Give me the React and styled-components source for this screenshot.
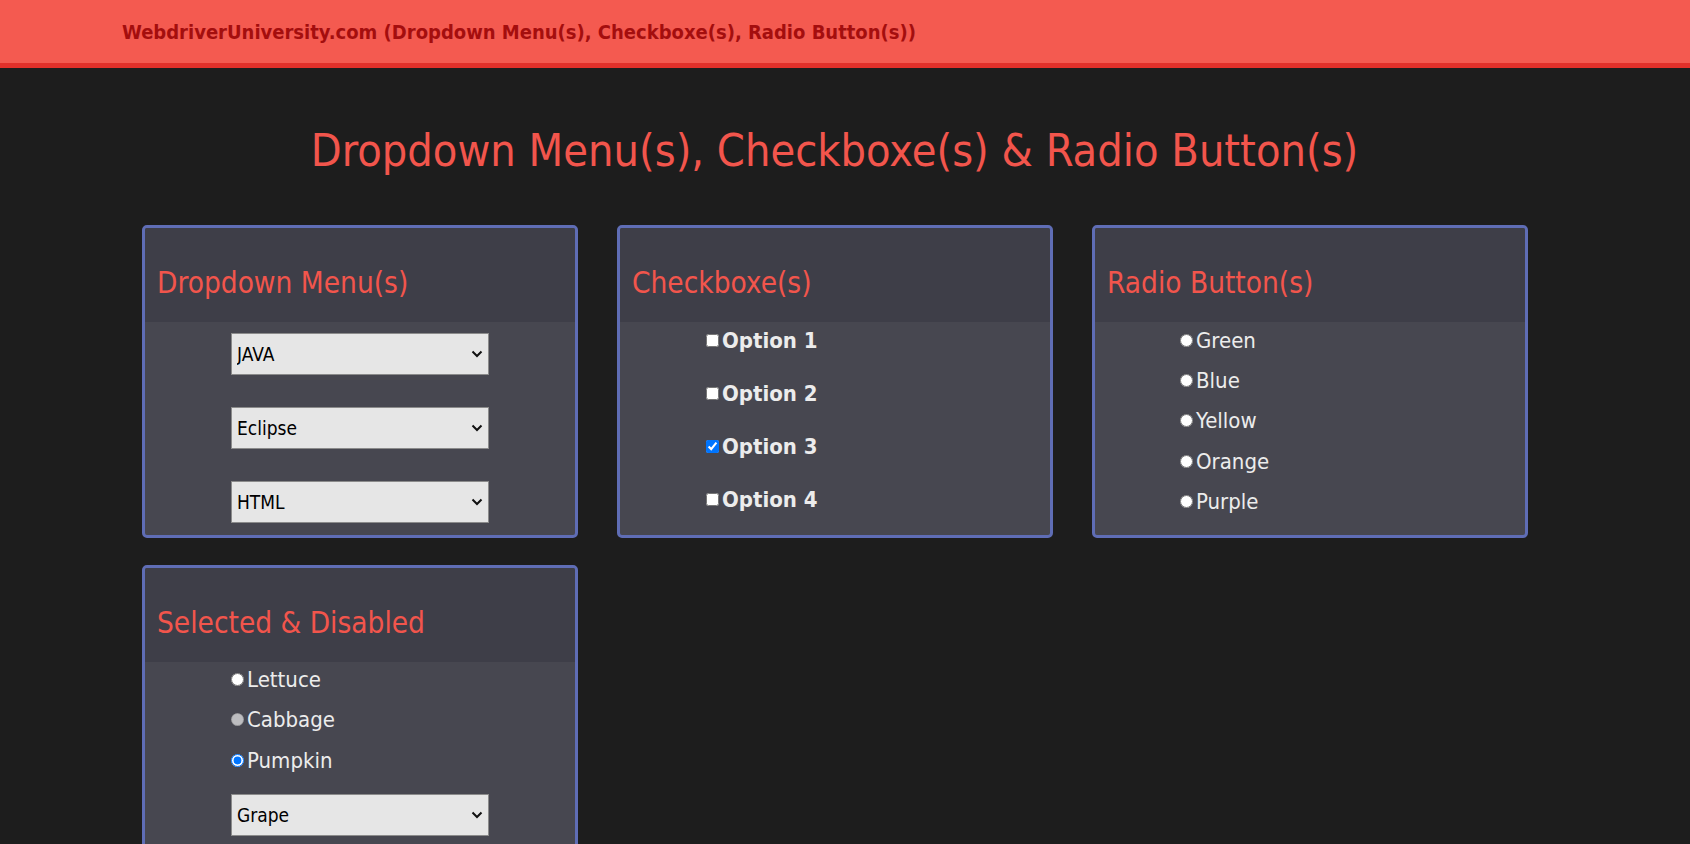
import React from 'react'
import styled, { createGlobalStyle } from 'styled-components'

const GlobalStyle = createGlobalStyle`
  html {
    overflow-y: scroll;
  }
  html::-webkit-scrollbar {
    width: 17px;
    background-color: #f1f1f1;
  }
  html::-webkit-scrollbar-thumb {
    background-color: #c1c1c1;
    border: 2px solid #f1f1f1;
    border-top-width: 17px;
  }
  body {
    margin: 0;
    background-color: #1d1d1d;
    font-family: "DejaVu Sans Condensed", "DejaVu Sans", sans-serif;
  }
`

const TopBar = styled.header`
  height: 63px;
  background-color: #f45a50;
  border-bottom: 5px solid #e2302a;
  display: flex;
  align-items: center;
  padding-left: 122px;
`
const Brand = styled.span`
  color: #a40e0e;
  font-size: 20px;
  font-weight: 700;
`
const Page = styled.main`
  width: 1385px;
  margin-left: 142px;
`
const Heading = styled.h1`
  margin: 0;
  height: 157px;
  display: flex;
  align-items: center;
  justify-content: center;
  padding-top: 9px;
  box-sizing: border-box;
  color: #f2554c;
  font-size: 44.7px;
  font-weight: 400;
`
const Grid = styled.div`
  display: grid;
  grid-template-columns: repeat(3, 436px);
  column-gap: 39px;
  row-gap: 27px;
`
const Panel = styled.section`
  border: 3px solid #5f6db5;
  border-radius: 5px;
  overflow: hidden;
  background-color: #474750;
`
const PanelHead = styled.div`
  height: 94px;
  background-color: #3e3e48;
  padding: 38px 0 0 12px;
  box-sizing: border-box;
`
const PanelTitle = styled.h2`
  margin: 0;
  color: #f2554c;
  font-size: 29.5px;
  font-weight: 400;
`
const PanelBody = styled.div`
  display: flex;
  flex-direction: column;
  align-items: ${p => (p.$center ? 'center' : 'flex-start')};
  gap: ${p => p.$gap}px;
  padding: ${p => p.$pad};
`
const Row = styled.label`
  display: flex;
  align-items: center;
  height: ${p => p.$h}px;
  color: #ececec;
  font-size: 22px;
  font-weight: ${p => (p.$bold ? 700 : 400)};
`
const Box = styled.input`
  width: 13px;
  height: 13px;
  margin: 0 3px 0 0;
`
const SelectWrap = styled.div`
  position: relative;
  width: 258px;
  height: 42px;
  margin-top: ${p => p.$top || 0}px;
`
const Select = styled.select`
  appearance: none;
  width: 100%;
  height: 100%;
  box-sizing: border-box;
  border: 1px solid #8b8b8b;
  border-radius: 0;
  background-color: #e6e6e6;
  padding: 0 0 0 5px;
  color: #000;
  font-family: "DejaVu Sans Condensed", "DejaVu Sans", sans-serif;
  font-size: 19px;
`
const Chevron = styled.svg`
  position: absolute;
  right: 6px;
  top: 17px;
  pointer-events: none;
`

const DropDown = ({ value, options, top }) => (
  <SelectWrap $top={top}>
    <Select defaultValue={value}>
      {options.map(o => <option key={o}>{o}</option>)}
    </Select>
    <Chevron width="12" height="8" viewBox="0 0 12 8">
      <path d="M1.5 1.5 L6 6 L10.5 1.5" fill="none" stroke="#111" strokeWidth="2" />
    </Chevron>
  </SelectWrap>
)

export default function App() {
  return (
    <>
      <GlobalStyle />
      <TopBar>
        <Brand>WebdriverUniversity.com (Dropdown Menu(s), Checkboxe(s), Radio Button(s))</Brand>
      </TopBar>
      <Page>
        <Heading>Dropdown Menu(s), Checkboxe(s) &amp; Radio Button(s)</Heading>
        <Grid>
          <Panel>
            <PanelHead><PanelTitle>Dropdown Menu(s)</PanelTitle></PanelHead>
            <PanelBody $center $gap={32} $pad="11px 0 12px 0">
              <DropDown value="JAVA" options={['JAVA', 'C#', 'Python', 'SQL']} />
              <DropDown value="Eclipse" options={['Eclipse', 'Maven', 'TestNG', 'JUnit']} />
              <DropDown value="HTML" options={['HTML', 'CSS', 'JavaScript', 'JQuery']} />
            </PanelBody>
          </Panel>

          <Panel>
            <PanelHead><PanelTitle>Checkboxe(s)</PanelTitle></PanelHead>
            <PanelBody $gap={17.3} $pad="0 0 0 86px">
              <Row $h={36} $bold><Box type="checkbox" />Option 1</Row>
              <Row $h={36} $bold><Box type="checkbox" />Option 2</Row>
              <Row $h={36} $bold><Box type="checkbox" defaultChecked />Option 3</Row>
              <Row $h={36} $bold><Box type="checkbox" />Option 4</Row>
            </PanelBody>
          </Panel>

          <Panel>
            <PanelHead><PanelTitle>Radio Button(s)</PanelTitle></PanelHead>
            <PanelBody $gap={4.4} $pad="0 0 0 85px">
              {['Green', 'Blue', 'Yellow', 'Orange', 'Purple'].map(c => (
                <Row key={c} $h={36}><Box type="radio" name="color" />{c}</Row>
              ))}
            </PanelBody>
          </Panel>

          <Panel>
            <PanelHead><PanelTitle>Selected &amp; Disabled</PanelTitle></PanelHead>
            <PanelBody $gap={6.5} $pad="0 0 20px 86px">
              <Row $h={34}><Box type="radio" name="veg" />Lettuce</Row>
              <Row $h={34}><Box type="radio" name="veg" disabled />Cabbage</Row>
              <Row $h={34}><Box type="radio" name="veg" defaultChecked />Pumpkin</Row>
              <DropDown top={10} value="Grape" options={['Apple', 'Orange', 'Pear', 'Grape']} />
            </PanelBody>
          </Panel>
        </Grid>
      </Page>
    </>
  )
}
